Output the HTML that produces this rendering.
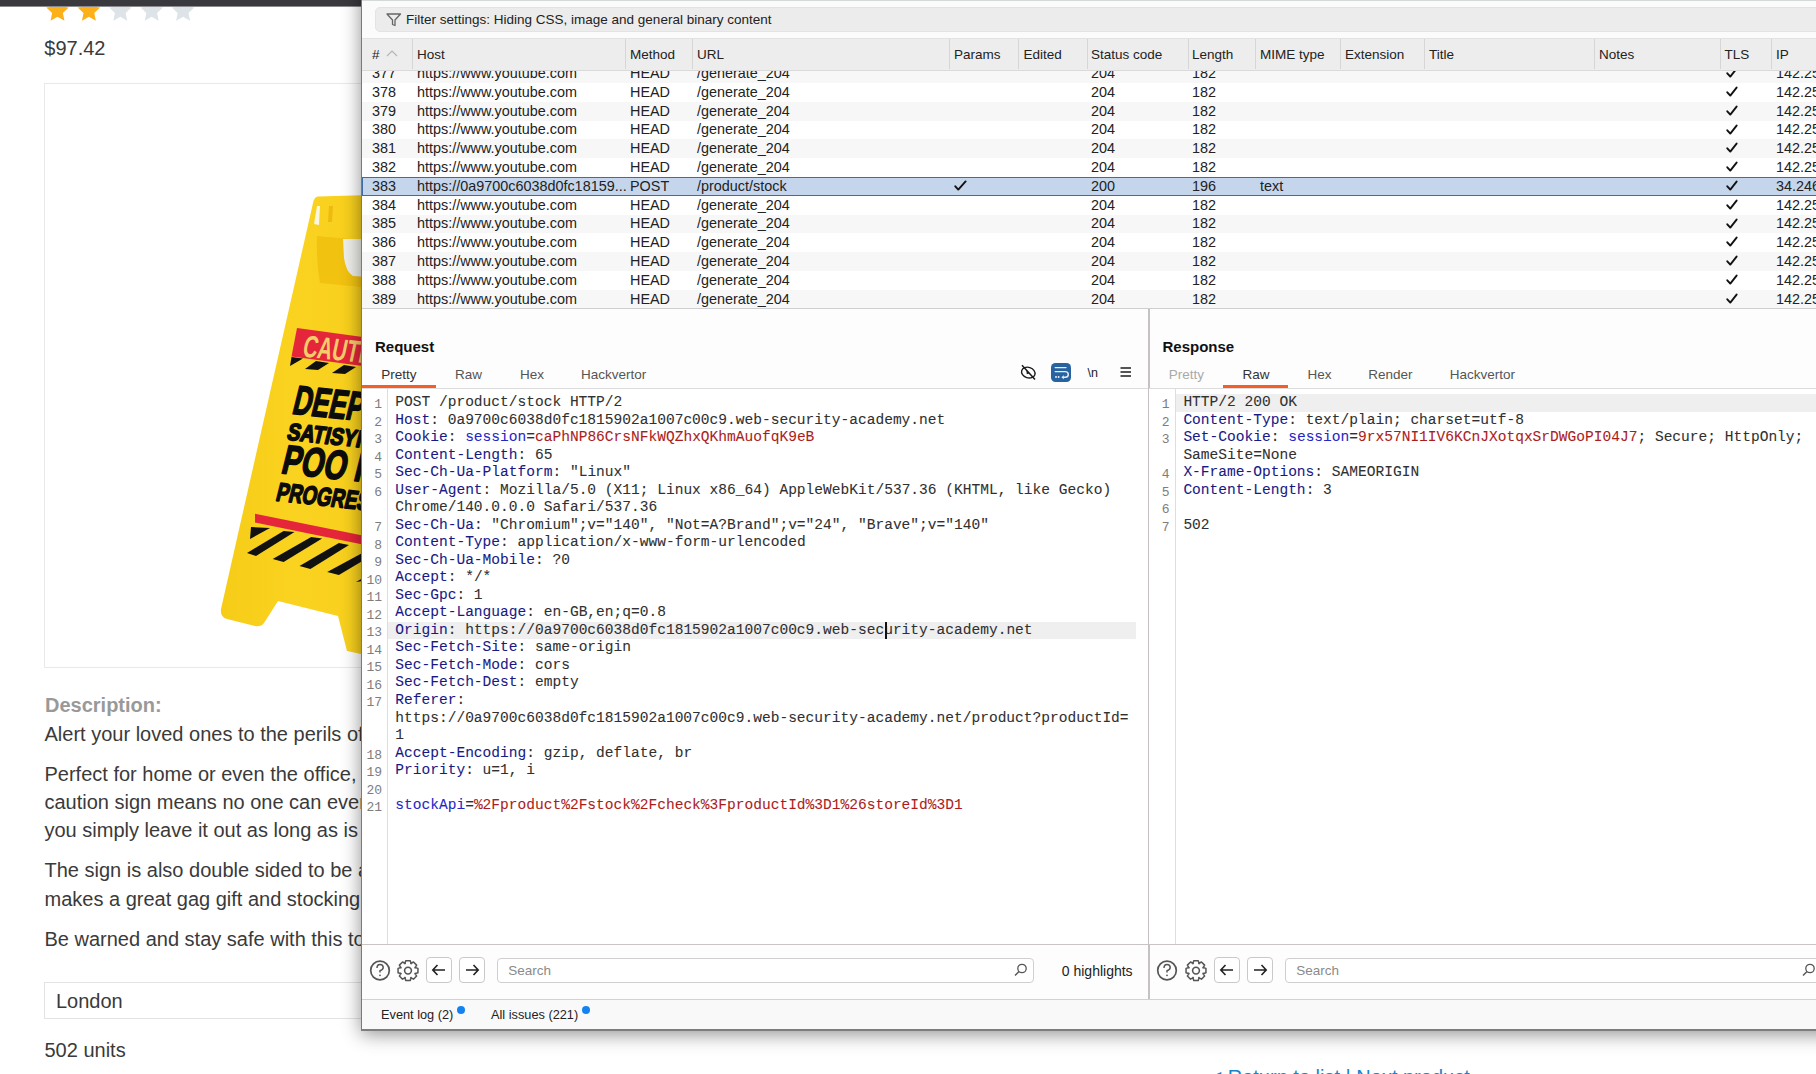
<!DOCTYPE html><html><head><meta charset="utf-8"><style>
html,body{margin:0;padding:0}
body{width:1816px;height:1074px;overflow:hidden;position:relative;background:#fff;font-family:'Liberation Sans',sans-serif}
.t{position:absolute;white-space:pre;line-height:1}
.r{position:absolute}
#burp{position:absolute;left:361px;top:0;width:1455px;height:1030px;overflow:hidden}
</style></head><body>

<div class="r" style="left:0px;top:0px;width:362px;height:6px;background:#3a393e"></div>
<div class="r" style="left:0px;top:6px;width:362px;height:1px;background:#8b8a8e"></div>
<svg class="r" style="left:0;top:0" width="362" height="30"><polygon points="57.50,-0.60 60.83,6.62 68.72,7.55 62.89,12.95 64.44,20.75 57.50,16.86 50.56,20.75 52.11,12.95 46.28,7.55 54.17,6.62" fill="#fdb017"/><polygon points="88.90,-0.60 92.23,6.62 100.12,7.55 94.29,12.95 95.84,20.75 88.90,16.86 81.96,20.75 83.51,12.95 77.68,7.55 85.57,6.62" fill="#fdb017"/><polygon points="120.30,-0.60 123.63,6.62 131.52,7.55 125.69,12.95 127.24,20.75 120.30,16.86 113.36,20.75 114.91,12.95 109.08,7.55 116.97,6.62" fill="#dde3e6"/><polygon points="151.70,-0.60 155.03,6.62 162.92,7.55 157.09,12.95 158.64,20.75 151.70,16.86 144.76,20.75 146.31,12.95 140.48,7.55 148.37,6.62" fill="#dde3e6"/><polygon points="183.10,-0.60 186.43,6.62 194.32,7.55 188.49,12.95 190.04,20.75 183.10,16.86 176.16,20.75 177.71,12.95 171.88,7.55 179.77,6.62" fill="#dde3e6"/></svg>
<div class="r" style="left:0px;top:0px;width:362px;height:6px;background:#3a393e"></div>
<div class="r" style="left:0px;top:6px;width:362px;height:1px;background:#8b8a8e"></div>
<div class="t" style="left:44.30px;top:37.57px;font-size:20px;color:#3a3a3a;font-weight:normal;font-family:'Liberation Sans', sans-serif;">$97.42</div>
<div class="r" style="left:44px;top:83px;width:700px;height:585px;border:1px solid #e9e9e9;box-sizing:border-box"></div>
<svg class="r" style="left:200px;top:180px" width="170" height="480" viewBox="200 180 170 480">
<defs><linearGradient id="sg" x1="0" x2="1" y1="0" y2="0"><stop offset="0" stop-color="#f6cc17"/><stop offset="0.5" stop-color="#fad320"/><stop offset="1" stop-color="#f7cf1c"/></linearGradient></defs>
<path d="M318,196.5 L370,195 L370,656 L347,651 L338,616 L278,601 L264,623 Q261,627 255,626 L227,619 Q220,617 221,609 L313,203 Q314,197 318,196.5 Z" fill="url(#sg)"/>
<path d="M317,236 L361,240 L361,287 L320,283 Q316,260 317,236 Z" fill="#f2c210"/>
<path d="M343,239 L370,239 L370,277 L353,276 Q346,272 344,258 Z" fill="#eeeeea"/>
<path d="M314,224 L317,206 L320,206 L319,225 Z" fill="#fbf6e0"/>
<path d="M329,206 L333,206 L332,222 L328,222 Z" fill="#efba10"/>
<path d="M297,328 L370,338 L370,367 L291.5,356.5 Z" fill="#e5253a"/>
<text x="0" y="0" font-family="Liberation Sans" font-weight="bold" font-size="31" fill="#f4cd6a" transform="translate(301.5,356.5) rotate(6) skewX(-6)" textLength="92" lengthAdjust="spacingAndGlyphs">CAUTION</text>
<path d="M297,328 L370,338 L370,367 L291.5,356.5 Z" fill="none"/>
<g fill="#111">
<path d="M291.5,357 L303,358.5 L290,366 Z"/>
<path d="M316,361 L329,363 L318,370 L305,369 Z"/>
<path d="M344,365 L356,367 L345,374 L332,373 Z"/>
</g>
<g font-family="Liberation Sans" font-weight="bold" fill="#0c0c0c" stroke="#0c0c0c" stroke-width="1.6" stroke-linejoin="round">
<text x="0" y="0" font-size="41" transform="translate(291,413.5) rotate(6) skewX(-8)" textLength="102" lengthAdjust="spacingAndGlyphs">DEEPLY</text>
<text x="0" y="0" font-size="24" transform="translate(286,439.5) rotate(6) skewX(-8)" textLength="104" lengthAdjust="spacingAndGlyphs">SATISYING</text>
<text x="0" y="0" font-size="41" transform="translate(280,473) rotate(6) skewX(-8)" textLength="102" lengthAdjust="spacingAndGlyphs">POO IN</text>
<text x="0" y="0" font-size="26" transform="translate(275,500.5) rotate(6) skewX(-8)" textLength="106" lengthAdjust="spacingAndGlyphs">PROGRESS</text>
</g>
<path d="M255,513.8 L370,537 L370,546 L255,522.6 Z" fill="#e5253a"/>
<g fill="#111">
<path d="M251,527 L270,528 L250,539 Z"/>
<path d="M283.6,531 L294.5,532 L256,556 L247,553 Z"/>
<path d="M311.2,537 L322.1,538.5 L283.6,562 L272.7,559 Z"/>
<path d="M338.9,543 L349,545 L310.4,569 L299.5,566 Z"/>
<path d="M366,551 L376,553 L338.9,575 L327.2,572 Z"/>
<path d="M370,574 L370,580 L356,582 Z"/>
</g>
</svg>
<div class="t" style="left:45.00px;top:695.07px;font-size:20px;color:#999;font-weight:bold;font-family:'Liberation Sans', sans-serif;">Description:</div>
<div class="t" style="left:44.50px;top:724.07px;font-size:20px;color:#3a3a3a;font-weight:normal;font-family:'Liberation Sans', sans-serif;">Alert your loved ones to the perils of the toilet with this handy caution sign.</div>
<div class="t" style="left:44.50px;top:764.07px;font-size:20px;color:#3a3a3a;font-weight:normal;font-family:'Liberation Sans', sans-serif;">Perfect for home or even the office, this hilarious and somewhat informative</div>
<div class="t" style="left:44.50px;top:791.57px;font-size:20px;color:#3a3a3a;font-weight:normal;font-family:'Liberation Sans', sans-serif;">caution sign means no one can ever claim they were not warned as long as</div>
<div class="t" style="left:44.50px;top:819.87px;font-size:20px;color:#3a3a3a;font-weight:normal;font-family:'Liberation Sans', sans-serif;">you simply leave it out as long as is needed.</div>
<div class="t" style="left:44.50px;top:860.07px;font-size:20px;color:#3a3a3a;font-weight:normal;font-family:'Liberation Sans', sans-serif;">The sign is also double sided to be able to warn from either direction. It</div>
<div class="t" style="left:44.50px;top:888.87px;font-size:20px;color:#3a3a3a;font-weight:normal;font-family:'Liberation Sans', sans-serif;">makes a great gag gift and stocking filler.</div>
<div class="t" style="left:44.50px;top:928.67px;font-size:20px;color:#3a3a3a;font-weight:normal;font-family:'Liberation Sans', sans-serif;">Be warned and stay safe with this toilet caution sign.</div>
<div class="r" style="left:44px;top:982px;width:700px;height:37px;border:1px solid #e3e3e3;box-sizing:border-box"></div>
<div class="t" style="left:56.00px;top:990.97px;font-size:20px;color:#3a3a3a;font-weight:normal;font-family:'Liberation Sans', sans-serif;">London</div>
<div class="t" style="left:44.50px;top:1040.07px;font-size:20px;color:#3a3a3a;font-weight:normal;font-family:'Liberation Sans', sans-serif;">502 units</div>
<div class="t" style="left:1210.50px;top:1067.47px;font-size:20px;color:#1e82c8;font-weight:normal;font-family:'Liberation Sans', sans-serif;">&lt; Return to list | Next product</div>
<div class="r" style="left:361px;top:-40px;width:1500px;height:1070px;box-shadow:0 4px 18px rgba(0,0,0,0.44);background:#fff"></div>
<div id="burp" style="background:#fbfbfb">
<div class="r" style="left:0px;top:0px;width:1455px;height:1px;background:#d6d9da"></div>
<div class="r" style="left:14px;top:7px;width:1460px;height:25px;background:#ececec;border:1px solid #e3e3e3;border-radius:5px;box-sizing:border-box"></div>
<svg class="r" style="left:25px;top:13px" width="16" height="14" viewBox="0 0 16 14"><path d="M1,1 L14.5,1 L9,7 L9,12.5 L6.5,11.5 L6.5,7 Z" fill="none" stroke="#666" stroke-width="1.3" stroke-linejoin="round"/></svg>
<div class="t" style="left:45.00px;top:12.87px;font-size:13.5px;color:#222;font-weight:normal;font-family:'Liberation Sans', sans-serif;">Filter settings: Hiding CSS, image and general binary content</div>
<div class="r" style="left:0;top:70px;width:1455px;height:239px;overflow:hidden">
<div class="r" style="left:0;top:-5.8px;width:1455px;height:19px;background:#f7f7f7"></div>
<div class="t" style="left:11.00px;top:-3.99px;font-size:14.4px;color:#222;font-weight:normal;font-family:'Liberation Sans', sans-serif;">377</div>
<div class="t" style="left:56.00px;top:-3.99px;font-size:14.4px;color:#222;font-weight:normal;font-family:'Liberation Sans', sans-serif;">https://www.youtube.com</div>
<div class="t" style="left:269.00px;top:-3.99px;font-size:14.4px;color:#222;font-weight:normal;font-family:'Liberation Sans', sans-serif;">HEAD</div>
<div class="t" style="left:336.00px;top:-3.99px;font-size:14.4px;color:#222;font-weight:normal;font-family:'Liberation Sans', sans-serif;">/generate_204</div>
<div class="t" style="left:730.00px;top:-3.99px;font-size:14.4px;color:#222;font-weight:normal;font-family:'Liberation Sans', sans-serif;">204</div>
<div class="t" style="left:831.00px;top:-3.99px;font-size:14.4px;color:#222;font-weight:normal;font-family:'Liberation Sans', sans-serif;">182</div>
<svg class="r" style="left:1365px;top:-5.8px" width="14" height="19"><path d="M1.3,9.3 L4.3,12.6 L10.6,4.6" fill="none" stroke="#111" stroke-width="1.9" stroke-linecap="round" stroke-linejoin="round"/></svg>
<div class="t" style="left:1415.00px;top:-3.99px;font-size:14.4px;color:#222;font-weight:normal;font-family:'Liberation Sans', sans-serif;">142.250</div>
<div class="r" style="left:0;top:13.0px;width:1455px;height:19px;background:#ffffff"></div>
<div class="t" style="left:11.00px;top:14.81px;font-size:14.4px;color:#222;font-weight:normal;font-family:'Liberation Sans', sans-serif;">378</div>
<div class="t" style="left:56.00px;top:14.81px;font-size:14.4px;color:#222;font-weight:normal;font-family:'Liberation Sans', sans-serif;">https://www.youtube.com</div>
<div class="t" style="left:269.00px;top:14.81px;font-size:14.4px;color:#222;font-weight:normal;font-family:'Liberation Sans', sans-serif;">HEAD</div>
<div class="t" style="left:336.00px;top:14.81px;font-size:14.4px;color:#222;font-weight:normal;font-family:'Liberation Sans', sans-serif;">/generate_204</div>
<div class="t" style="left:730.00px;top:14.81px;font-size:14.4px;color:#222;font-weight:normal;font-family:'Liberation Sans', sans-serif;">204</div>
<div class="t" style="left:831.00px;top:14.81px;font-size:14.4px;color:#222;font-weight:normal;font-family:'Liberation Sans', sans-serif;">182</div>
<svg class="r" style="left:1365px;top:13.0px" width="14" height="19"><path d="M1.3,9.3 L4.3,12.6 L10.6,4.6" fill="none" stroke="#111" stroke-width="1.9" stroke-linecap="round" stroke-linejoin="round"/></svg>
<div class="t" style="left:1415.00px;top:14.81px;font-size:14.4px;color:#222;font-weight:normal;font-family:'Liberation Sans', sans-serif;">142.250</div>
<div class="r" style="left:0;top:31.8px;width:1455px;height:19px;background:#f7f7f7"></div>
<div class="t" style="left:11.00px;top:33.61px;font-size:14.4px;color:#222;font-weight:normal;font-family:'Liberation Sans', sans-serif;">379</div>
<div class="t" style="left:56.00px;top:33.61px;font-size:14.4px;color:#222;font-weight:normal;font-family:'Liberation Sans', sans-serif;">https://www.youtube.com</div>
<div class="t" style="left:269.00px;top:33.61px;font-size:14.4px;color:#222;font-weight:normal;font-family:'Liberation Sans', sans-serif;">HEAD</div>
<div class="t" style="left:336.00px;top:33.61px;font-size:14.4px;color:#222;font-weight:normal;font-family:'Liberation Sans', sans-serif;">/generate_204</div>
<div class="t" style="left:730.00px;top:33.61px;font-size:14.4px;color:#222;font-weight:normal;font-family:'Liberation Sans', sans-serif;">204</div>
<div class="t" style="left:831.00px;top:33.61px;font-size:14.4px;color:#222;font-weight:normal;font-family:'Liberation Sans', sans-serif;">182</div>
<svg class="r" style="left:1365px;top:31.8px" width="14" height="19"><path d="M1.3,9.3 L4.3,12.6 L10.6,4.6" fill="none" stroke="#111" stroke-width="1.9" stroke-linecap="round" stroke-linejoin="round"/></svg>
<div class="t" style="left:1415.00px;top:33.61px;font-size:14.4px;color:#222;font-weight:normal;font-family:'Liberation Sans', sans-serif;">142.250</div>
<div class="r" style="left:0;top:50.6px;width:1455px;height:19px;background:#ffffff"></div>
<div class="t" style="left:11.00px;top:52.41px;font-size:14.4px;color:#222;font-weight:normal;font-family:'Liberation Sans', sans-serif;">380</div>
<div class="t" style="left:56.00px;top:52.41px;font-size:14.4px;color:#222;font-weight:normal;font-family:'Liberation Sans', sans-serif;">https://www.youtube.com</div>
<div class="t" style="left:269.00px;top:52.41px;font-size:14.4px;color:#222;font-weight:normal;font-family:'Liberation Sans', sans-serif;">HEAD</div>
<div class="t" style="left:336.00px;top:52.41px;font-size:14.4px;color:#222;font-weight:normal;font-family:'Liberation Sans', sans-serif;">/generate_204</div>
<div class="t" style="left:730.00px;top:52.41px;font-size:14.4px;color:#222;font-weight:normal;font-family:'Liberation Sans', sans-serif;">204</div>
<div class="t" style="left:831.00px;top:52.41px;font-size:14.4px;color:#222;font-weight:normal;font-family:'Liberation Sans', sans-serif;">182</div>
<svg class="r" style="left:1365px;top:50.6px" width="14" height="19"><path d="M1.3,9.3 L4.3,12.6 L10.6,4.6" fill="none" stroke="#111" stroke-width="1.9" stroke-linecap="round" stroke-linejoin="round"/></svg>
<div class="t" style="left:1415.00px;top:52.41px;font-size:14.4px;color:#222;font-weight:normal;font-family:'Liberation Sans', sans-serif;">142.250</div>
<div class="r" style="left:0;top:69.4px;width:1455px;height:19px;background:#f7f7f7"></div>
<div class="t" style="left:11.00px;top:71.21px;font-size:14.4px;color:#222;font-weight:normal;font-family:'Liberation Sans', sans-serif;">381</div>
<div class="t" style="left:56.00px;top:71.21px;font-size:14.4px;color:#222;font-weight:normal;font-family:'Liberation Sans', sans-serif;">https://www.youtube.com</div>
<div class="t" style="left:269.00px;top:71.21px;font-size:14.4px;color:#222;font-weight:normal;font-family:'Liberation Sans', sans-serif;">HEAD</div>
<div class="t" style="left:336.00px;top:71.21px;font-size:14.4px;color:#222;font-weight:normal;font-family:'Liberation Sans', sans-serif;">/generate_204</div>
<div class="t" style="left:730.00px;top:71.21px;font-size:14.4px;color:#222;font-weight:normal;font-family:'Liberation Sans', sans-serif;">204</div>
<div class="t" style="left:831.00px;top:71.21px;font-size:14.4px;color:#222;font-weight:normal;font-family:'Liberation Sans', sans-serif;">182</div>
<svg class="r" style="left:1365px;top:69.4px" width="14" height="19"><path d="M1.3,9.3 L4.3,12.6 L10.6,4.6" fill="none" stroke="#111" stroke-width="1.9" stroke-linecap="round" stroke-linejoin="round"/></svg>
<div class="t" style="left:1415.00px;top:71.21px;font-size:14.4px;color:#222;font-weight:normal;font-family:'Liberation Sans', sans-serif;">142.250</div>
<div class="r" style="left:0;top:88.2px;width:1455px;height:19px;background:#ffffff"></div>
<div class="t" style="left:11.00px;top:90.01px;font-size:14.4px;color:#222;font-weight:normal;font-family:'Liberation Sans', sans-serif;">382</div>
<div class="t" style="left:56.00px;top:90.01px;font-size:14.4px;color:#222;font-weight:normal;font-family:'Liberation Sans', sans-serif;">https://www.youtube.com</div>
<div class="t" style="left:269.00px;top:90.01px;font-size:14.4px;color:#222;font-weight:normal;font-family:'Liberation Sans', sans-serif;">HEAD</div>
<div class="t" style="left:336.00px;top:90.01px;font-size:14.4px;color:#222;font-weight:normal;font-family:'Liberation Sans', sans-serif;">/generate_204</div>
<div class="t" style="left:730.00px;top:90.01px;font-size:14.4px;color:#222;font-weight:normal;font-family:'Liberation Sans', sans-serif;">204</div>
<div class="t" style="left:831.00px;top:90.01px;font-size:14.4px;color:#222;font-weight:normal;font-family:'Liberation Sans', sans-serif;">182</div>
<svg class="r" style="left:1365px;top:88.2px" width="14" height="19"><path d="M1.3,9.3 L4.3,12.6 L10.6,4.6" fill="none" stroke="#111" stroke-width="1.9" stroke-linecap="round" stroke-linejoin="round"/></svg>
<div class="t" style="left:1415.00px;top:90.01px;font-size:14.4px;color:#222;font-weight:normal;font-family:'Liberation Sans', sans-serif;">142.250</div>
<div class="r" style="left:1px;top:107.0px;width:1460px;height:19px;background:#c5d6ec;border:1px solid #3a6ea5;box-sizing:border-box"></div>
<div class="t" style="left:11.00px;top:108.81px;font-size:14.4px;color:#222;font-weight:normal;font-family:'Liberation Sans', sans-serif;">383</div>
<div class="t" style="left:56.00px;top:108.81px;font-size:14.4px;color:#222;font-weight:normal;font-family:'Liberation Sans', sans-serif;">https://0a9700c6038d0fc18159...</div>
<div class="t" style="left:269.00px;top:108.81px;font-size:14.4px;color:#222;font-weight:normal;font-family:'Liberation Sans', sans-serif;">POST</div>
<div class="t" style="left:336.00px;top:108.81px;font-size:14.4px;color:#222;font-weight:normal;font-family:'Liberation Sans', sans-serif;">/product/stock</div>
<svg class="r" style="left:593px;top:107.0px" width="14" height="19"><path d="M1.3,9.3 L4.3,12.6 L11.6,4.4" fill="none" stroke="#111" stroke-width="1.9" stroke-linecap="round" stroke-linejoin="round"/></svg>
<div class="t" style="left:730.00px;top:108.81px;font-size:14.4px;color:#222;font-weight:normal;font-family:'Liberation Sans', sans-serif;">200</div>
<div class="t" style="left:831.00px;top:108.81px;font-size:14.4px;color:#222;font-weight:normal;font-family:'Liberation Sans', sans-serif;">196</div>
<div class="t" style="left:899.00px;top:108.81px;font-size:14.4px;color:#222;font-weight:normal;font-family:'Liberation Sans', sans-serif;">text</div>
<svg class="r" style="left:1365px;top:107.0px" width="14" height="19"><path d="M1.3,9.3 L4.3,12.6 L10.6,4.6" fill="none" stroke="#111" stroke-width="1.9" stroke-linecap="round" stroke-linejoin="round"/></svg>
<div class="t" style="left:1415.00px;top:108.81px;font-size:14.4px;color:#222;font-weight:normal;font-family:'Liberation Sans', sans-serif;">34.246</div>
<div class="r" style="left:0;top:125.8px;width:1455px;height:19px;background:#ffffff"></div>
<div class="t" style="left:11.00px;top:127.61px;font-size:14.4px;color:#222;font-weight:normal;font-family:'Liberation Sans', sans-serif;">384</div>
<div class="t" style="left:56.00px;top:127.61px;font-size:14.4px;color:#222;font-weight:normal;font-family:'Liberation Sans', sans-serif;">https://www.youtube.com</div>
<div class="t" style="left:269.00px;top:127.61px;font-size:14.4px;color:#222;font-weight:normal;font-family:'Liberation Sans', sans-serif;">HEAD</div>
<div class="t" style="left:336.00px;top:127.61px;font-size:14.4px;color:#222;font-weight:normal;font-family:'Liberation Sans', sans-serif;">/generate_204</div>
<div class="t" style="left:730.00px;top:127.61px;font-size:14.4px;color:#222;font-weight:normal;font-family:'Liberation Sans', sans-serif;">204</div>
<div class="t" style="left:831.00px;top:127.61px;font-size:14.4px;color:#222;font-weight:normal;font-family:'Liberation Sans', sans-serif;">182</div>
<svg class="r" style="left:1365px;top:125.8px" width="14" height="19"><path d="M1.3,9.3 L4.3,12.6 L10.6,4.6" fill="none" stroke="#111" stroke-width="1.9" stroke-linecap="round" stroke-linejoin="round"/></svg>
<div class="t" style="left:1415.00px;top:127.61px;font-size:14.4px;color:#222;font-weight:normal;font-family:'Liberation Sans', sans-serif;">142.250</div>
<div class="r" style="left:0;top:144.6px;width:1455px;height:19px;background:#f7f7f7"></div>
<div class="t" style="left:11.00px;top:146.41px;font-size:14.4px;color:#222;font-weight:normal;font-family:'Liberation Sans', sans-serif;">385</div>
<div class="t" style="left:56.00px;top:146.41px;font-size:14.4px;color:#222;font-weight:normal;font-family:'Liberation Sans', sans-serif;">https://www.youtube.com</div>
<div class="t" style="left:269.00px;top:146.41px;font-size:14.4px;color:#222;font-weight:normal;font-family:'Liberation Sans', sans-serif;">HEAD</div>
<div class="t" style="left:336.00px;top:146.41px;font-size:14.4px;color:#222;font-weight:normal;font-family:'Liberation Sans', sans-serif;">/generate_204</div>
<div class="t" style="left:730.00px;top:146.41px;font-size:14.4px;color:#222;font-weight:normal;font-family:'Liberation Sans', sans-serif;">204</div>
<div class="t" style="left:831.00px;top:146.41px;font-size:14.4px;color:#222;font-weight:normal;font-family:'Liberation Sans', sans-serif;">182</div>
<svg class="r" style="left:1365px;top:144.6px" width="14" height="19"><path d="M1.3,9.3 L4.3,12.6 L10.6,4.6" fill="none" stroke="#111" stroke-width="1.9" stroke-linecap="round" stroke-linejoin="round"/></svg>
<div class="t" style="left:1415.00px;top:146.41px;font-size:14.4px;color:#222;font-weight:normal;font-family:'Liberation Sans', sans-serif;">142.250</div>
<div class="r" style="left:0;top:163.4px;width:1455px;height:19px;background:#ffffff"></div>
<div class="t" style="left:11.00px;top:165.21px;font-size:14.4px;color:#222;font-weight:normal;font-family:'Liberation Sans', sans-serif;">386</div>
<div class="t" style="left:56.00px;top:165.21px;font-size:14.4px;color:#222;font-weight:normal;font-family:'Liberation Sans', sans-serif;">https://www.youtube.com</div>
<div class="t" style="left:269.00px;top:165.21px;font-size:14.4px;color:#222;font-weight:normal;font-family:'Liberation Sans', sans-serif;">HEAD</div>
<div class="t" style="left:336.00px;top:165.21px;font-size:14.4px;color:#222;font-weight:normal;font-family:'Liberation Sans', sans-serif;">/generate_204</div>
<div class="t" style="left:730.00px;top:165.21px;font-size:14.4px;color:#222;font-weight:normal;font-family:'Liberation Sans', sans-serif;">204</div>
<div class="t" style="left:831.00px;top:165.21px;font-size:14.4px;color:#222;font-weight:normal;font-family:'Liberation Sans', sans-serif;">182</div>
<svg class="r" style="left:1365px;top:163.4px" width="14" height="19"><path d="M1.3,9.3 L4.3,12.6 L10.6,4.6" fill="none" stroke="#111" stroke-width="1.9" stroke-linecap="round" stroke-linejoin="round"/></svg>
<div class="t" style="left:1415.00px;top:165.21px;font-size:14.4px;color:#222;font-weight:normal;font-family:'Liberation Sans', sans-serif;">142.250</div>
<div class="r" style="left:0;top:182.2px;width:1455px;height:19px;background:#f7f7f7"></div>
<div class="t" style="left:11.00px;top:184.01px;font-size:14.4px;color:#222;font-weight:normal;font-family:'Liberation Sans', sans-serif;">387</div>
<div class="t" style="left:56.00px;top:184.01px;font-size:14.4px;color:#222;font-weight:normal;font-family:'Liberation Sans', sans-serif;">https://www.youtube.com</div>
<div class="t" style="left:269.00px;top:184.01px;font-size:14.4px;color:#222;font-weight:normal;font-family:'Liberation Sans', sans-serif;">HEAD</div>
<div class="t" style="left:336.00px;top:184.01px;font-size:14.4px;color:#222;font-weight:normal;font-family:'Liberation Sans', sans-serif;">/generate_204</div>
<div class="t" style="left:730.00px;top:184.01px;font-size:14.4px;color:#222;font-weight:normal;font-family:'Liberation Sans', sans-serif;">204</div>
<div class="t" style="left:831.00px;top:184.01px;font-size:14.4px;color:#222;font-weight:normal;font-family:'Liberation Sans', sans-serif;">182</div>
<svg class="r" style="left:1365px;top:182.2px" width="14" height="19"><path d="M1.3,9.3 L4.3,12.6 L10.6,4.6" fill="none" stroke="#111" stroke-width="1.9" stroke-linecap="round" stroke-linejoin="round"/></svg>
<div class="t" style="left:1415.00px;top:184.01px;font-size:14.4px;color:#222;font-weight:normal;font-family:'Liberation Sans', sans-serif;">142.250</div>
<div class="r" style="left:0;top:201.0px;width:1455px;height:19px;background:#ffffff"></div>
<div class="t" style="left:11.00px;top:202.81px;font-size:14.4px;color:#222;font-weight:normal;font-family:'Liberation Sans', sans-serif;">388</div>
<div class="t" style="left:56.00px;top:202.81px;font-size:14.4px;color:#222;font-weight:normal;font-family:'Liberation Sans', sans-serif;">https://www.youtube.com</div>
<div class="t" style="left:269.00px;top:202.81px;font-size:14.4px;color:#222;font-weight:normal;font-family:'Liberation Sans', sans-serif;">HEAD</div>
<div class="t" style="left:336.00px;top:202.81px;font-size:14.4px;color:#222;font-weight:normal;font-family:'Liberation Sans', sans-serif;">/generate_204</div>
<div class="t" style="left:730.00px;top:202.81px;font-size:14.4px;color:#222;font-weight:normal;font-family:'Liberation Sans', sans-serif;">204</div>
<div class="t" style="left:831.00px;top:202.81px;font-size:14.4px;color:#222;font-weight:normal;font-family:'Liberation Sans', sans-serif;">182</div>
<svg class="r" style="left:1365px;top:201.0px" width="14" height="19"><path d="M1.3,9.3 L4.3,12.6 L10.6,4.6" fill="none" stroke="#111" stroke-width="1.9" stroke-linecap="round" stroke-linejoin="round"/></svg>
<div class="t" style="left:1415.00px;top:202.81px;font-size:14.4px;color:#222;font-weight:normal;font-family:'Liberation Sans', sans-serif;">142.250</div>
<div class="r" style="left:0;top:219.8px;width:1455px;height:19px;background:#f7f7f7"></div>
<div class="t" style="left:11.00px;top:221.61px;font-size:14.4px;color:#222;font-weight:normal;font-family:'Liberation Sans', sans-serif;">389</div>
<div class="t" style="left:56.00px;top:221.61px;font-size:14.4px;color:#222;font-weight:normal;font-family:'Liberation Sans', sans-serif;">https://www.youtube.com</div>
<div class="t" style="left:269.00px;top:221.61px;font-size:14.4px;color:#222;font-weight:normal;font-family:'Liberation Sans', sans-serif;">HEAD</div>
<div class="t" style="left:336.00px;top:221.61px;font-size:14.4px;color:#222;font-weight:normal;font-family:'Liberation Sans', sans-serif;">/generate_204</div>
<div class="t" style="left:730.00px;top:221.61px;font-size:14.4px;color:#222;font-weight:normal;font-family:'Liberation Sans', sans-serif;">204</div>
<div class="t" style="left:831.00px;top:221.61px;font-size:14.4px;color:#222;font-weight:normal;font-family:'Liberation Sans', sans-serif;">182</div>
<svg class="r" style="left:1365px;top:219.8px" width="14" height="19"><path d="M1.3,9.3 L4.3,12.6 L10.6,4.6" fill="none" stroke="#111" stroke-width="1.9" stroke-linecap="round" stroke-linejoin="round"/></svg>
<div class="t" style="left:1415.00px;top:221.61px;font-size:14.4px;color:#222;font-weight:normal;font-family:'Liberation Sans', sans-serif;">142.250</div>
</div>
<div class="r" style="left:0px;top:38px;width:1455px;height:33px;background:#ededed;border-top:1px solid #e2e2e2;border-bottom:1px solid #dadada;box-sizing:border-box"></div>
<div class="r" style="left:51px;top:39px;width:1px;height:30px;background:#d6d6d6"></div>
<div class="r" style="left:264px;top:39px;width:1px;height:30px;background:#d6d6d6"></div>
<div class="r" style="left:331px;top:39px;width:1px;height:30px;background:#d6d6d6"></div>
<div class="r" style="left:588px;top:39px;width:1px;height:30px;background:#d6d6d6"></div>
<div class="r" style="left:657px;top:39px;width:1px;height:30px;background:#d6d6d6"></div>
<div class="r" style="left:726px;top:39px;width:1px;height:30px;background:#d6d6d6"></div>
<div class="r" style="left:827px;top:39px;width:1px;height:30px;background:#d6d6d6"></div>
<div class="r" style="left:894px;top:39px;width:1px;height:30px;background:#d6d6d6"></div>
<div class="r" style="left:979px;top:39px;width:1px;height:30px;background:#d6d6d6"></div>
<div class="r" style="left:1063px;top:39px;width:1px;height:30px;background:#d6d6d6"></div>
<div class="r" style="left:1233px;top:39px;width:1px;height:30px;background:#d6d6d6"></div>
<div class="r" style="left:1359px;top:39px;width:1px;height:30px;background:#d6d6d6"></div>
<div class="r" style="left:1410px;top:39px;width:1px;height:30px;background:#d6d6d6"></div>
<div class="t" style="left:11.00px;top:48.07px;font-size:13.5px;color:#222;font-weight:normal;font-family:'Liberation Sans', sans-serif;">#</div>
<div class="t" style="left:56.00px;top:48.07px;font-size:13.5px;color:#222;font-weight:normal;font-family:'Liberation Sans', sans-serif;">Host</div>
<div class="t" style="left:269.00px;top:48.07px;font-size:13.5px;color:#222;font-weight:normal;font-family:'Liberation Sans', sans-serif;">Method</div>
<div class="t" style="left:336.00px;top:48.07px;font-size:13.5px;color:#222;font-weight:normal;font-family:'Liberation Sans', sans-serif;">URL</div>
<div class="t" style="left:593.00px;top:48.07px;font-size:13.5px;color:#222;font-weight:normal;font-family:'Liberation Sans', sans-serif;">Params</div>
<div class="t" style="left:662.50px;top:48.07px;font-size:13.5px;color:#222;font-weight:normal;font-family:'Liberation Sans', sans-serif;">Edited</div>
<div class="t" style="left:730.00px;top:48.07px;font-size:13.5px;color:#222;font-weight:normal;font-family:'Liberation Sans', sans-serif;">Status code</div>
<div class="t" style="left:831.00px;top:48.07px;font-size:13.5px;color:#222;font-weight:normal;font-family:'Liberation Sans', sans-serif;">Length</div>
<div class="t" style="left:899.00px;top:48.07px;font-size:13.5px;color:#222;font-weight:normal;font-family:'Liberation Sans', sans-serif;">MIME type</div>
<div class="t" style="left:984.00px;top:48.07px;font-size:13.5px;color:#222;font-weight:normal;font-family:'Liberation Sans', sans-serif;">Extension</div>
<div class="t" style="left:1068.00px;top:48.07px;font-size:13.5px;color:#222;font-weight:normal;font-family:'Liberation Sans', sans-serif;">Title</div>
<div class="t" style="left:1238.00px;top:48.07px;font-size:13.5px;color:#222;font-weight:normal;font-family:'Liberation Sans', sans-serif;">Notes</div>
<div class="t" style="left:1363.50px;top:48.07px;font-size:13.5px;color:#222;font-weight:normal;font-family:'Liberation Sans', sans-serif;">TLS</div>
<div class="t" style="left:1415.00px;top:48.07px;font-size:13.5px;color:#222;font-weight:normal;font-family:'Liberation Sans', sans-serif;">IP</div>
<svg class="r" style="left:24px;top:48px" width="14" height="10" viewBox="0 0 14 10"><path d="M2,8 L7,3 L12,8" fill="none" stroke="#b5b5b5" stroke-width="1.2"/></svg>
<div class="r" style="left:0px;top:308px;width:1455px;height:1px;background:#cfcfcf"></div>
<div class="r" style="left:1px;top:309px;width:1455px;height:690px;background:#fdfdfd"></div>
<div class="r" style="left:787px;top:309px;width:1.5px;height:690px;background:#c6c2c2"></div>
<div class="t" style="left:14.00px;top:339.30px;font-size:15px;color:#111;font-weight:bold;font-family:'Liberation Sans', sans-serif;">Request</div>
<div class="t" style="left:20.20px;top:368.07px;font-size:13.5px;color:#333;font-weight:normal;font-family:'Liberation Sans', sans-serif;">Pretty</div>
<div class="t" style="left:94.00px;top:368.07px;font-size:13.5px;color:#555;font-weight:normal;font-family:'Liberation Sans', sans-serif;">Raw</div>
<div class="t" style="left:159.00px;top:368.07px;font-size:13.5px;color:#555;font-weight:normal;font-family:'Liberation Sans', sans-serif;">Hex</div>
<div class="t" style="left:220.00px;top:368.07px;font-size:13.5px;color:#555;font-weight:normal;font-family:'Liberation Sans', sans-serif;">Hackvertor</div>
<div class="r" style="left:1px;top:388px;width:786px;height:1px;background:#dcdcdc"></div>
<div class="r" style="left:1px;top:385px;width:74px;height:3px;background:#f65e28"></div>
<div class="t" style="left:801.50px;top:339.30px;font-size:15px;color:#111;font-weight:bold;font-family:'Liberation Sans', sans-serif;">Response</div>
<div class="t" style="left:807.70px;top:368.07px;font-size:13.5px;color:#aaa;font-weight:normal;font-family:'Liberation Sans', sans-serif;">Pretty</div>
<div class="t" style="left:881.40px;top:368.07px;font-size:13.5px;color:#333;font-weight:normal;font-family:'Liberation Sans', sans-serif;">Raw</div>
<div class="t" style="left:946.50px;top:368.07px;font-size:13.5px;color:#555;font-weight:normal;font-family:'Liberation Sans', sans-serif;">Hex</div>
<div class="t" style="left:1007.20px;top:368.07px;font-size:13.5px;color:#555;font-weight:normal;font-family:'Liberation Sans', sans-serif;">Render</div>
<div class="t" style="left:1088.80px;top:368.07px;font-size:13.5px;color:#555;font-weight:normal;font-family:'Liberation Sans', sans-serif;">Hackvertor</div>
<div class="r" style="left:788px;top:388px;width:700px;height:1px;background:#dcdcdc"></div>
<div class="r" style="left:862px;top:385px;width:65px;height:3px;background:#f65e28"></div>
<div class="r" style="left:1px;top:389px;width:786px;height:555px;background:#ffffff"></div>
<div class="r" style="left:788px;top:389px;width:700px;height:555px;background:#ffffff"></div>
<div class="r" style="left:26px;top:389px;width:1px;height:555px;background:#dedede"></div>
<div class="r" style="left:814px;top:389px;width:1px;height:555px;background:#dedede"></div>
<div class="r" style="left:1px;top:943.5px;width:786px;height:1.5px;background:#c9c5c5"></div>
<div class="r" style="left:788px;top:943.5px;width:700px;height:1.5px;background:#c9c5c5"></div>
<svg class="r" style="left:655px;top:362px" width="120" height="22" viewBox="1016 362 120 22">
<g fill="none" stroke="#1a1a1a" stroke-width="1.35">
<ellipse cx="1028.3" cy="372.6" rx="6.9" ry="5.2" transform="rotate(18 1028.3 372.6)"/>
<path d="M1022,365.3 L1035,379.6" stroke-width="1.5"/>
</g>
<path d="M1026.3,370 L1029.6,373.3 L1026.8,374.2 Z" fill="#1a1a1a"/>
<rect x="1051" y="363" width="20" height="19" rx="4.5" fill="#2863a1"/>
<g fill="none" stroke="#e6edf5" stroke-width="1.4" stroke-linecap="round"><path d="M1055.2,367.6 L1066,367.6"/><path d="M1055.2,371.6 L1065.2,371.6 Q1068.3,371.6 1068.3,374.5 Q1068.3,377.3 1065.2,377.3 L1063.6,377.3"/></g>
<path d="M1061.3,377.3 L1063.8,375.3 L1063.8,379.3 Z" fill="#e6edf5"/>
<g fill="#e6edf5"><circle cx="1056" cy="377" r="1"/><circle cx="1058.6" cy="377" r="1"/></g>
<text x="1087.5" y="376.5" font-family="Liberation Sans" font-size="12.5" fill="#222">\n</text>
<g fill="#555"><rect x="1120.5" y="367" width="10.5" height="2"/><rect x="1120.5" y="371" width="10.5" height="2"/><rect x="1120.5" y="375" width="10.5" height="2"/></g>
</svg>
<svg class="r" style="left:0;top:0" width="1" height="1"></svg>
<div class="t" style="left:13.20px;top:398.34px;font-size:13px;color:#7d7d7d;font-weight:normal;font-family:'Liberation Mono', monospace;">1</div>
<div class="t" style="left:34.30px;top:395.15px;font-size:14.55px;color:#303030;font-weight:normal;font-family:'Liberation Mono', monospace;-webkit-text-stroke:0.08px #303030">POST /product/stock HTTP/2</div>
<div class="t" style="left:13.20px;top:415.86px;font-size:13px;color:#7d7d7d;font-weight:normal;font-family:'Liberation Mono', monospace;">2</div>
<div class="t" style="left:34.30px;top:412.67px;font-size:14.55px;color:#191985;font-weight:normal;font-family:'Liberation Mono', monospace;-webkit-text-stroke:0.08px #191985">Host</div>
<div class="t" style="left:69.23px;top:412.67px;font-size:14.55px;color:#303030;font-weight:normal;font-family:'Liberation Mono', monospace;-webkit-text-stroke:0.08px #303030">: 0a9700c6038d0fc1815902a1007c00c9.web-security-academy.net</div>
<div class="t" style="left:13.20px;top:433.38px;font-size:13px;color:#7d7d7d;font-weight:normal;font-family:'Liberation Mono', monospace;">3</div>
<div class="t" style="left:34.30px;top:430.19px;font-size:14.55px;color:#191985;font-weight:normal;font-family:'Liberation Mono', monospace;-webkit-text-stroke:0.08px #191985">Cookie</div>
<div class="t" style="left:86.69px;top:430.19px;font-size:14.55px;color:#303030;font-weight:normal;font-family:'Liberation Mono', monospace;-webkit-text-stroke:0.08px #303030">: </div>
<div class="t" style="left:104.15px;top:430.19px;font-size:14.55px;color:#2626c6;font-weight:normal;font-family:'Liberation Mono', monospace;-webkit-text-stroke:0.08px #2626c6">session</div>
<div class="t" style="left:165.27px;top:430.19px;font-size:14.55px;color:#303030;font-weight:normal;font-family:'Liberation Mono', monospace;-webkit-text-stroke:0.08px #303030">=</div>
<div class="t" style="left:174.00px;top:430.19px;font-size:14.55px;color:#ad1c1c;font-weight:normal;font-family:'Liberation Mono', monospace;-webkit-text-stroke:0.08px #ad1c1c">caPhNP86CrsNFkWQZhxQKhmAuofqK9eB</div>
<div class="t" style="left:13.20px;top:450.90px;font-size:13px;color:#7d7d7d;font-weight:normal;font-family:'Liberation Mono', monospace;">4</div>
<div class="t" style="left:34.30px;top:447.71px;font-size:14.55px;color:#191985;font-weight:normal;font-family:'Liberation Mono', monospace;-webkit-text-stroke:0.08px #191985">Content-Length</div>
<div class="t" style="left:156.54px;top:447.71px;font-size:14.55px;color:#303030;font-weight:normal;font-family:'Liberation Mono', monospace;-webkit-text-stroke:0.08px #303030">: 65</div>
<div class="t" style="left:13.20px;top:468.42px;font-size:13px;color:#7d7d7d;font-weight:normal;font-family:'Liberation Mono', monospace;">5</div>
<div class="t" style="left:34.30px;top:465.23px;font-size:14.55px;color:#191985;font-weight:normal;font-family:'Liberation Mono', monospace;-webkit-text-stroke:0.08px #191985">Sec-Ch-Ua-Platform</div>
<div class="t" style="left:191.47px;top:465.23px;font-size:14.55px;color:#303030;font-weight:normal;font-family:'Liberation Mono', monospace;-webkit-text-stroke:0.08px #303030">: &quot;Linux&quot;</div>
<div class="t" style="left:13.20px;top:485.94px;font-size:13px;color:#7d7d7d;font-weight:normal;font-family:'Liberation Mono', monospace;">6</div>
<div class="t" style="left:34.30px;top:482.75px;font-size:14.55px;color:#191985;font-weight:normal;font-family:'Liberation Mono', monospace;-webkit-text-stroke:0.08px #191985">User-Agent</div>
<div class="t" style="left:121.61px;top:482.75px;font-size:14.55px;color:#303030;font-weight:normal;font-family:'Liberation Mono', monospace;-webkit-text-stroke:0.08px #303030">: Mozilla/5.0 (X11; Linux x86_64) AppleWebKit/537.36 (KHTML, like Gecko)</div>
<div class="t" style="left:34.30px;top:500.27px;font-size:14.55px;color:#303030;font-weight:normal;font-family:'Liberation Mono', monospace;-webkit-text-stroke:0.08px #303030">Chrome/140.0.0.0 Safari/537.36</div>
<div class="t" style="left:13.20px;top:520.98px;font-size:13px;color:#7d7d7d;font-weight:normal;font-family:'Liberation Mono', monospace;">7</div>
<div class="t" style="left:34.30px;top:517.79px;font-size:14.55px;color:#191985;font-weight:normal;font-family:'Liberation Mono', monospace;-webkit-text-stroke:0.08px #191985">Sec-Ch-Ua</div>
<div class="t" style="left:112.88px;top:517.79px;font-size:14.55px;color:#303030;font-weight:normal;font-family:'Liberation Mono', monospace;-webkit-text-stroke:0.08px #303030">: &quot;Chromium&quot;;v=&quot;140&quot;, &quot;Not=A?Brand&quot;;v=&quot;24&quot;, &quot;Brave&quot;;v=&quot;140&quot;</div>
<div class="t" style="left:13.20px;top:538.50px;font-size:13px;color:#7d7d7d;font-weight:normal;font-family:'Liberation Mono', monospace;">8</div>
<div class="t" style="left:34.30px;top:535.31px;font-size:14.55px;color:#191985;font-weight:normal;font-family:'Liberation Mono', monospace;-webkit-text-stroke:0.08px #191985">Content-Type</div>
<div class="t" style="left:139.08px;top:535.31px;font-size:14.55px;color:#303030;font-weight:normal;font-family:'Liberation Mono', monospace;-webkit-text-stroke:0.08px #303030">: application/x-www-form-urlencoded</div>
<div class="t" style="left:13.20px;top:556.02px;font-size:13px;color:#7d7d7d;font-weight:normal;font-family:'Liberation Mono', monospace;">9</div>
<div class="t" style="left:34.30px;top:552.83px;font-size:14.55px;color:#191985;font-weight:normal;font-family:'Liberation Mono', monospace;-webkit-text-stroke:0.08px #191985">Sec-Ch-Ua-Mobile</div>
<div class="t" style="left:174.00px;top:552.83px;font-size:14.55px;color:#303030;font-weight:normal;font-family:'Liberation Mono', monospace;-webkit-text-stroke:0.08px #303030">: ?0</div>
<div class="t" style="left:5.40px;top:573.54px;font-size:13px;color:#7d7d7d;font-weight:normal;font-family:'Liberation Mono', monospace;">10</div>
<div class="t" style="left:34.30px;top:570.35px;font-size:14.55px;color:#191985;font-weight:normal;font-family:'Liberation Mono', monospace;-webkit-text-stroke:0.08px #191985">Accept</div>
<div class="t" style="left:86.69px;top:570.35px;font-size:14.55px;color:#303030;font-weight:normal;font-family:'Liberation Mono', monospace;-webkit-text-stroke:0.08px #303030">: */*</div>
<div class="t" style="left:5.40px;top:591.06px;font-size:13px;color:#7d7d7d;font-weight:normal;font-family:'Liberation Mono', monospace;">11</div>
<div class="t" style="left:34.30px;top:587.87px;font-size:14.55px;color:#191985;font-weight:normal;font-family:'Liberation Mono', monospace;-webkit-text-stroke:0.08px #191985">Sec-Gpc</div>
<div class="t" style="left:95.42px;top:587.87px;font-size:14.55px;color:#303030;font-weight:normal;font-family:'Liberation Mono', monospace;-webkit-text-stroke:0.08px #303030">: 1</div>
<div class="t" style="left:5.40px;top:608.58px;font-size:13px;color:#7d7d7d;font-weight:normal;font-family:'Liberation Mono', monospace;">12</div>
<div class="t" style="left:34.30px;top:605.39px;font-size:14.55px;color:#191985;font-weight:normal;font-family:'Liberation Mono', monospace;-webkit-text-stroke:0.08px #191985">Accept-Language</div>
<div class="t" style="left:165.27px;top:605.39px;font-size:14.55px;color:#303030;font-weight:normal;font-family:'Liberation Mono', monospace;-webkit-text-stroke:0.08px #303030">: en-GB,en;q=0.8</div>
<div class="r" style="left:27px;top:622.16px;width:748px;height:17.3px;background:#efefef"></div>
<div class="t" style="left:5.40px;top:626.10px;font-size:13px;color:#7d7d7d;font-weight:normal;font-family:'Liberation Mono', monospace;">13</div>
<div class="t" style="left:34.30px;top:622.91px;font-size:14.55px;color:#191985;font-weight:normal;font-family:'Liberation Mono', monospace;-webkit-text-stroke:0.08px #191985">Origin</div>
<div class="t" style="left:86.69px;top:622.91px;font-size:14.55px;color:#303030;font-weight:normal;font-family:'Liberation Mono', monospace;-webkit-text-stroke:0.08px #303030">: https://0a9700c6038d0fc1815902a1007c00c9.web-security-academy.net</div>
<div class="t" style="left:5.40px;top:643.62px;font-size:13px;color:#7d7d7d;font-weight:normal;font-family:'Liberation Mono', monospace;">14</div>
<div class="t" style="left:34.30px;top:640.43px;font-size:14.55px;color:#191985;font-weight:normal;font-family:'Liberation Mono', monospace;-webkit-text-stroke:0.08px #191985">Sec-Fetch-Site</div>
<div class="t" style="left:156.54px;top:640.43px;font-size:14.55px;color:#303030;font-weight:normal;font-family:'Liberation Mono', monospace;-webkit-text-stroke:0.08px #303030">: same-origin</div>
<div class="t" style="left:5.40px;top:661.14px;font-size:13px;color:#7d7d7d;font-weight:normal;font-family:'Liberation Mono', monospace;">15</div>
<div class="t" style="left:34.30px;top:657.95px;font-size:14.55px;color:#191985;font-weight:normal;font-family:'Liberation Mono', monospace;-webkit-text-stroke:0.08px #191985">Sec-Fetch-Mode</div>
<div class="t" style="left:156.54px;top:657.95px;font-size:14.55px;color:#303030;font-weight:normal;font-family:'Liberation Mono', monospace;-webkit-text-stroke:0.08px #303030">: cors</div>
<div class="t" style="left:5.40px;top:678.66px;font-size:13px;color:#7d7d7d;font-weight:normal;font-family:'Liberation Mono', monospace;">16</div>
<div class="t" style="left:34.30px;top:675.47px;font-size:14.55px;color:#191985;font-weight:normal;font-family:'Liberation Mono', monospace;-webkit-text-stroke:0.08px #191985">Sec-Fetch-Dest</div>
<div class="t" style="left:156.54px;top:675.47px;font-size:14.55px;color:#303030;font-weight:normal;font-family:'Liberation Mono', monospace;-webkit-text-stroke:0.08px #303030">: empty</div>
<div class="t" style="left:5.40px;top:696.18px;font-size:13px;color:#7d7d7d;font-weight:normal;font-family:'Liberation Mono', monospace;">17</div>
<div class="t" style="left:34.30px;top:692.99px;font-size:14.55px;color:#191985;font-weight:normal;font-family:'Liberation Mono', monospace;-webkit-text-stroke:0.08px #191985">Referer</div>
<div class="t" style="left:95.42px;top:692.99px;font-size:14.55px;color:#303030;font-weight:normal;font-family:'Liberation Mono', monospace;-webkit-text-stroke:0.08px #303030">:</div>
<div class="t" style="left:34.30px;top:710.51px;font-size:14.55px;color:#303030;font-weight:normal;font-family:'Liberation Mono', monospace;-webkit-text-stroke:0.08px #303030">https://0a9700c6038d0fc1815902a1007c00c9.web-security-academy.net/product?productId=</div>
<div class="t" style="left:34.30px;top:728.03px;font-size:14.55px;color:#303030;font-weight:normal;font-family:'Liberation Mono', monospace;-webkit-text-stroke:0.08px #303030">1</div>
<div class="t" style="left:5.40px;top:748.74px;font-size:13px;color:#7d7d7d;font-weight:normal;font-family:'Liberation Mono', monospace;">18</div>
<div class="t" style="left:34.30px;top:745.55px;font-size:14.55px;color:#191985;font-weight:normal;font-family:'Liberation Mono', monospace;-webkit-text-stroke:0.08px #191985">Accept-Encoding</div>
<div class="t" style="left:165.27px;top:745.55px;font-size:14.55px;color:#303030;font-weight:normal;font-family:'Liberation Mono', monospace;-webkit-text-stroke:0.08px #303030">: gzip, deflate, br</div>
<div class="t" style="left:5.40px;top:766.26px;font-size:13px;color:#7d7d7d;font-weight:normal;font-family:'Liberation Mono', monospace;">19</div>
<div class="t" style="left:34.30px;top:763.07px;font-size:14.55px;color:#191985;font-weight:normal;font-family:'Liberation Mono', monospace;-webkit-text-stroke:0.08px #191985">Priority</div>
<div class="t" style="left:104.15px;top:763.07px;font-size:14.55px;color:#303030;font-weight:normal;font-family:'Liberation Mono', monospace;-webkit-text-stroke:0.08px #303030">: u=1, i</div>
<div class="t" style="left:5.40px;top:783.78px;font-size:13px;color:#7d7d7d;font-weight:normal;font-family:'Liberation Mono', monospace;">20</div>
<div class="t" style="left:5.40px;top:801.30px;font-size:13px;color:#7d7d7d;font-weight:normal;font-family:'Liberation Mono', monospace;">21</div>
<div class="t" style="left:34.30px;top:798.11px;font-size:14.55px;color:#2626c6;font-weight:normal;font-family:'Liberation Mono', monospace;-webkit-text-stroke:0.08px #2626c6">stockApi</div>
<div class="t" style="left:104.15px;top:798.11px;font-size:14.55px;color:#303030;font-weight:normal;font-family:'Liberation Mono', monospace;-webkit-text-stroke:0.08px #303030">=</div>
<div class="t" style="left:112.88px;top:798.11px;font-size:14.55px;color:#ad1c1c;font-weight:normal;font-family:'Liberation Mono', monospace;-webkit-text-stroke:0.08px #ad1c1c">%2Fproduct%2Fstock%2Fcheck%3FproductId%3D1%26storeId%3D1</div>
<div class="r" style="left:524px;top:622px;width:2px;height:17px;background:#111"></div>
<div class="r" style="left:815px;top:394.40000000000003px;width:640px;height:17.3px;background:#efefef"></div>
<div class="t" style="left:800.70px;top:398.34px;font-size:13px;color:#7d7d7d;font-weight:normal;font-family:'Liberation Mono', monospace;">1</div>
<div class="t" style="left:822.40px;top:395.15px;font-size:14.55px;color:#303030;font-weight:normal;font-family:'Liberation Mono', monospace;-webkit-text-stroke:0.08px #303030">HTTP/2 200 OK</div>
<div class="t" style="left:800.70px;top:415.86px;font-size:13px;color:#7d7d7d;font-weight:normal;font-family:'Liberation Mono', monospace;">2</div>
<div class="t" style="left:822.40px;top:412.67px;font-size:14.55px;color:#191985;font-weight:normal;font-family:'Liberation Mono', monospace;-webkit-text-stroke:0.08px #191985">Content-Type</div>
<div class="t" style="left:927.18px;top:412.67px;font-size:14.55px;color:#303030;font-weight:normal;font-family:'Liberation Mono', monospace;-webkit-text-stroke:0.08px #303030">: text/plain; charset=utf-8</div>
<div class="t" style="left:800.70px;top:433.38px;font-size:13px;color:#7d7d7d;font-weight:normal;font-family:'Liberation Mono', monospace;">3</div>
<div class="t" style="left:822.40px;top:430.19px;font-size:14.55px;color:#191985;font-weight:normal;font-family:'Liberation Mono', monospace;-webkit-text-stroke:0.08px #191985">Set-Cookie</div>
<div class="t" style="left:909.71px;top:430.19px;font-size:14.55px;color:#303030;font-weight:normal;font-family:'Liberation Mono', monospace;-webkit-text-stroke:0.08px #303030">: </div>
<div class="t" style="left:927.18px;top:430.19px;font-size:14.55px;color:#2626c6;font-weight:normal;font-family:'Liberation Mono', monospace;-webkit-text-stroke:0.08px #2626c6">session</div>
<div class="t" style="left:988.30px;top:430.19px;font-size:14.55px;color:#303030;font-weight:normal;font-family:'Liberation Mono', monospace;-webkit-text-stroke:0.08px #303030">=</div>
<div class="t" style="left:997.03px;top:430.19px;font-size:14.55px;color:#ad1c1c;font-weight:normal;font-family:'Liberation Mono', monospace;-webkit-text-stroke:0.08px #ad1c1c">9rx57NI1IV6KCnJXotqxSrDWGoPI04J7</div>
<div class="t" style="left:1276.44px;top:430.19px;font-size:14.55px;color:#303030;font-weight:normal;font-family:'Liberation Mono', monospace;-webkit-text-stroke:0.08px #303030">; Secure; HttpOnly;</div>
<div class="t" style="left:822.40px;top:447.71px;font-size:14.55px;color:#303030;font-weight:normal;font-family:'Liberation Mono', monospace;-webkit-text-stroke:0.08px #303030">SameSite=None</div>
<div class="t" style="left:800.70px;top:468.42px;font-size:13px;color:#7d7d7d;font-weight:normal;font-family:'Liberation Mono', monospace;">4</div>
<div class="t" style="left:822.40px;top:465.23px;font-size:14.55px;color:#191985;font-weight:normal;font-family:'Liberation Mono', monospace;-webkit-text-stroke:0.08px #191985">X-Frame-Options</div>
<div class="t" style="left:953.37px;top:465.23px;font-size:14.55px;color:#303030;font-weight:normal;font-family:'Liberation Mono', monospace;-webkit-text-stroke:0.08px #303030">: SAMEORIGIN</div>
<div class="t" style="left:800.70px;top:485.94px;font-size:13px;color:#7d7d7d;font-weight:normal;font-family:'Liberation Mono', monospace;">5</div>
<div class="t" style="left:822.40px;top:482.75px;font-size:14.55px;color:#191985;font-weight:normal;font-family:'Liberation Mono', monospace;-webkit-text-stroke:0.08px #191985">Content-Length</div>
<div class="t" style="left:944.64px;top:482.75px;font-size:14.55px;color:#303030;font-weight:normal;font-family:'Liberation Mono', monospace;-webkit-text-stroke:0.08px #303030">: 3</div>
<div class="t" style="left:800.70px;top:503.46px;font-size:13px;color:#7d7d7d;font-weight:normal;font-family:'Liberation Mono', monospace;">6</div>
<div class="t" style="left:800.70px;top:520.98px;font-size:13px;color:#7d7d7d;font-weight:normal;font-family:'Liberation Mono', monospace;">7</div>
<div class="t" style="left:822.40px;top:517.79px;font-size:14.55px;color:#303030;font-weight:normal;font-family:'Liberation Mono', monospace;-webkit-text-stroke:0.08px #303030">502</div>
<svg class="r" style="left:6.5px;top:958px" width="30" height="26" viewBox="367.5 958 30 26">
<circle cx="379.5" cy="970.5" r="9.3" fill="none" stroke="#555" stroke-width="1.7"/>
<path d="M376.5,968 Q376.5,964.5 379.5,964.5 Q382.7,964.5 382.7,967.6 Q382.7,969.8 379.5,970.8 L379.5,972.6" fill="none" stroke="#555" stroke-width="1.5"/>
<circle cx="379.5" cy="975.3" r="0.9" fill="#555"/>
</svg>
<svg class="r" style="left:34.19999999999999px;top:957px" width="26" height="28" viewBox="395.2 957 26 28">
<polygon points="418.15,968.37 418.15,972.83 415.14,973.70 415.30,973.32 416.81,976.06 413.66,979.21 410.92,977.70 411.30,977.54 410.43,980.55 405.97,980.55 405.10,977.54 405.48,977.70 402.74,979.21 399.59,976.06 401.10,973.32 401.26,973.70 398.25,972.83 398.25,968.37 401.26,967.50 401.10,967.88 399.59,965.14 402.74,961.99 405.48,963.50 405.10,963.66 405.97,960.65 410.43,960.65 411.30,963.66 410.92,963.50 413.66,961.99 416.81,965.14 415.30,967.88 415.14,967.50" fill="none" stroke="#555" stroke-width="1.5" stroke-linejoin="round"/>
<circle cx="408.2" cy="970.6" r="3.4" fill="none" stroke="#555" stroke-width="1.6"/></svg>
<div class="r" style="left:65px;top:957px;width:26px;height:26px;border:1px solid #c9c9c9;border-radius:4px;box-sizing:border-box;background:#fff"></div>
<svg class="r" style="left:65px;top:957px" width="26" height="26" viewBox="426 957 26 26"><path d="M445,970 L433,970 M437.5,965 L432.8,970 L437.5,975" fill="none" stroke="#222" stroke-width="1.6"/></svg>
<div class="r" style="left:97.5px;top:957px;width:26px;height:26px;border:1px solid #c9c9c9;border-radius:4px;box-sizing:border-box;background:#fff"></div>
<svg class="r" style="left:97.5px;top:957px" width="26" height="26" viewBox="458.5 957 26 26"><path d="M465.5,970 L477.5,970 M473.0,965 L477.7,970 L473.0,975" fill="none" stroke="#222" stroke-width="1.6"/></svg>
<div class="r" style="left:136px;top:958px;width:537px;height:25px;border:1px solid #cfcfcf;border-radius:4px;box-sizing:border-box;background:#fff"></div>
<div class="t" style="left:147.20px;top:964.07px;font-size:13.5px;color:#8a8a8a;font-weight:normal;font-family:'Liberation Sans', sans-serif;">Search</div>
<svg class="r" style="left:651px;top:962px" width="16" height="16" viewBox="1012 962 16 16"><circle cx="1022" cy="968.5" r="4.2" fill="none" stroke="#555" stroke-width="1.3"/><path d="M1019,971.5 L1015,975.5" stroke="#555" stroke-width="1.5"/></svg>
<div class="t" style="left:700.80px;top:963.95px;font-size:14px;color:#222;font-weight:normal;font-family:'Liberation Sans', sans-serif;">0 highlights</div>
<svg class="r" style="left:793.8px;top:958px" width="30" height="26" viewBox="1154.8 958 30 26">
<circle cx="1166.8" cy="970.5" r="9.3" fill="none" stroke="#555" stroke-width="1.7"/>
<path d="M1163.8,968 Q1163.8,964.5 1166.8,964.5 Q1170.0,964.5 1170.0,967.6 Q1170.0,969.8 1166.8,970.8 L1166.8,972.6" fill="none" stroke="#555" stroke-width="1.5"/>
<circle cx="1166.8" cy="975.3" r="0.9" fill="#555"/>
</svg>
<svg class="r" style="left:821.8px;top:957px" width="26" height="28" viewBox="1182.8 957 26 28">
<polygon points="1205.75,968.37 1205.75,972.83 1202.74,973.70 1202.90,973.32 1204.41,976.06 1201.26,979.21 1198.52,977.70 1198.90,977.54 1198.03,980.55 1193.57,980.55 1192.70,977.54 1193.08,977.70 1190.34,979.21 1187.19,976.06 1188.70,973.32 1188.86,973.70 1185.85,972.83 1185.85,968.37 1188.86,967.50 1188.70,967.88 1187.19,965.14 1190.34,961.99 1193.08,963.50 1192.70,963.66 1193.57,960.65 1198.03,960.65 1198.90,963.66 1198.52,963.50 1201.26,961.99 1204.41,965.14 1202.90,967.88 1202.74,967.50" fill="none" stroke="#555" stroke-width="1.5" stroke-linejoin="round"/>
<circle cx="1195.8" cy="970.6" r="3.4" fill="none" stroke="#555" stroke-width="1.6"/></svg>
<div class="r" style="left:852.5px;top:957px;width:26px;height:26px;border:1px solid #c9c9c9;border-radius:4px;box-sizing:border-box;background:#fff"></div>
<svg class="r" style="left:852.5px;top:957px" width="26" height="26" viewBox="1213.5 957 26 26"><path d="M1232.5,970 L1220.5,970 M1225.0,965 L1220.3,970 L1225.0,975" fill="none" stroke="#222" stroke-width="1.6"/></svg>
<div class="r" style="left:885.5px;top:957px;width:26px;height:26px;border:1px solid #c9c9c9;border-radius:4px;box-sizing:border-box;background:#fff"></div>
<svg class="r" style="left:885.5px;top:957px" width="26" height="26" viewBox="1246.5 957 26 26"><path d="M1253.5,970 L1265.5,970 M1261.0,965 L1265.7,970 L1261.0,975" fill="none" stroke="#222" stroke-width="1.6"/></svg>
<div class="r" style="left:924px;top:958px;width:537px;height:25px;border:1px solid #cfcfcf;border-radius:4px;box-sizing:border-box;background:#fff"></div>
<div class="t" style="left:935.20px;top:964.07px;font-size:13.5px;color:#8a8a8a;font-weight:normal;font-family:'Liberation Sans', sans-serif;">Search</div>
<svg class="r" style="left:1439px;top:962px" width="16" height="16" viewBox="1800 962 16 16"><circle cx="1810" cy="968.5" r="4.2" fill="none" stroke="#555" stroke-width="1.3"/><path d="M1807,971.5 L1803,975.5" stroke="#555" stroke-width="1.5"/></svg>
<div class="r" style="left:787px;top:944px;width:1.5px;height:55px;background:#c6c2c2"></div>
<div class="r" style="left:0px;top:999px;width:1455px;height:31px;background:#f9f9f9;border-top:1px solid #d2d2d2;box-sizing:border-box"></div>
<div class="t" style="left:20.00px;top:1008.81px;font-size:12.75px;color:#222;font-weight:normal;font-family:'Liberation Sans', sans-serif;">Event log (2)</div>
<div class="r" style="left:96px;top:1005.5px;width:8px;height:8px;background:#1284f2;border-radius:50%"></div>
<div class="t" style="left:130.00px;top:1008.81px;font-size:12.75px;color:#222;font-weight:normal;font-family:'Liberation Sans', sans-serif;">All issues (221)</div>
<div class="r" style="left:221px;top:1005.5px;width:8px;height:8px;background:#1284f2;border-radius:50%"></div>
</div>
<div class="r" style="left:361px;top:0px;width:1px;height:1030px;background:#7a7a7a"></div>
<div class="r" style="left:361px;top:1029px;width:1455px;height:1.5px;background:#7d7d7d"></div>
</body></html>
